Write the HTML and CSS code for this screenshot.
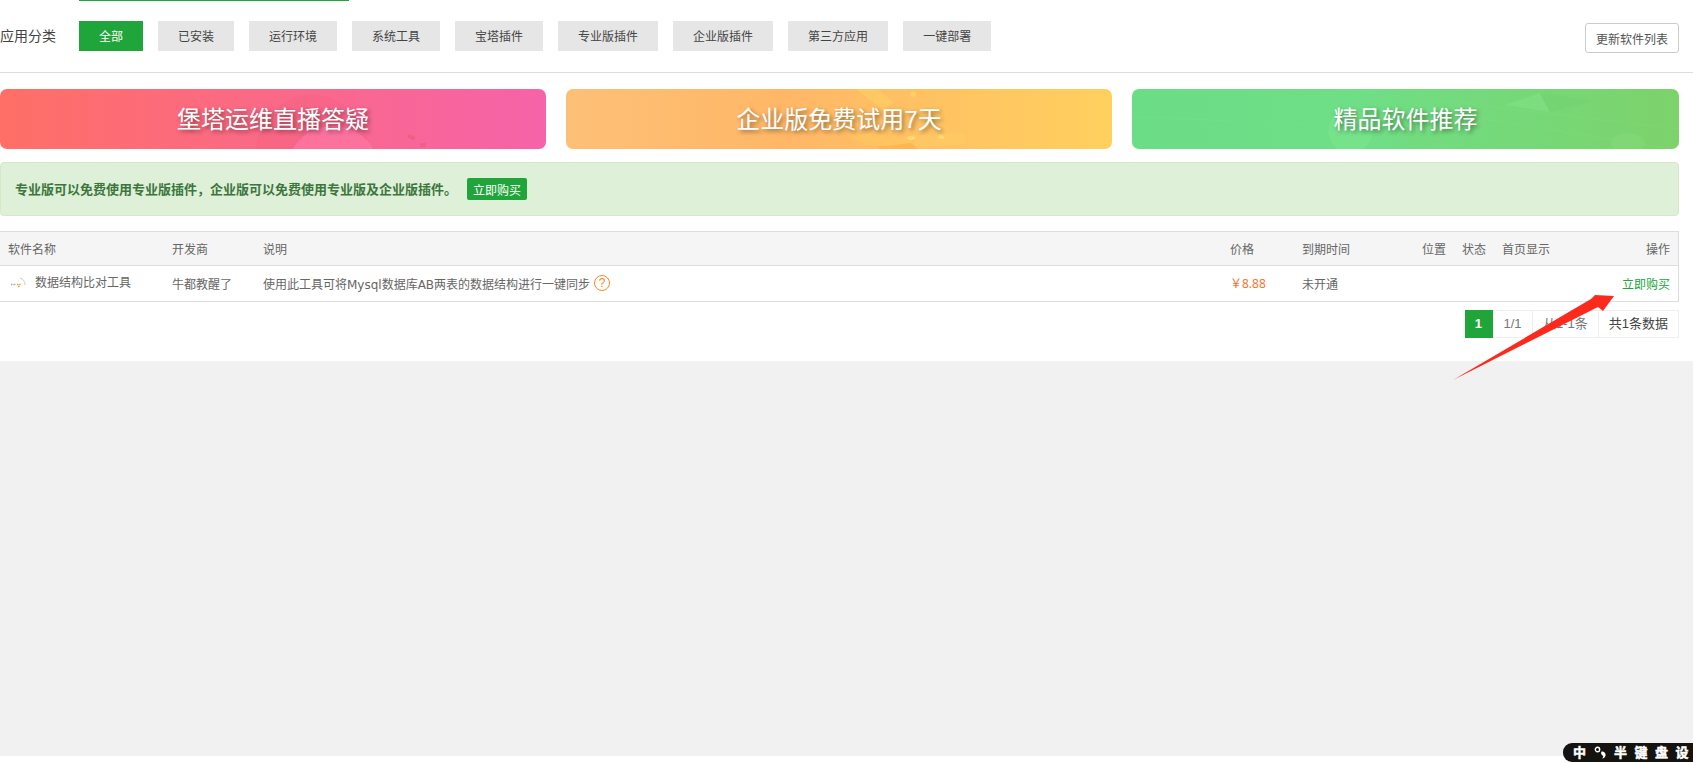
FILE: index.html
```html
<!DOCTYPE html>
<html lang="zh-CN">
<head>
<meta charset="utf-8">
<title>软件商店</title>
<link rel="stylesheet" href="styles.css">
</head>
<body>
<main class="panel">
  <div class="top-tab-line"></div>
  <div class="filter-row">
    <span class="filter-label">应用分类</span>
    <nav class="tabs">
      <a class="tab active">全部</a>
      <a class="tab">已安装</a>
      <a class="tab">运行环境</a>
      <a class="tab">系统工具</a>
      <a class="tab">宝塔插件</a>
      <a class="tab">专业版插件</a>
      <a class="tab">企业版插件</a>
      <a class="tab">第三方应用</a>
      <a class="tab">一键部署</a>
    </nav>
    <button class="refresh">更新软件列表</button>
  </div>

  <section class="banners">
    <div class="banner banner-pink">
      <svg class="banner-art" viewBox="0 0 546 60" preserveAspectRatio="none">
        <circle cx="312" cy="62" r="56" fill="#ee5a6e" opacity=".16"/>
        <circle cx="333" cy="84" r="47" fill="#ff7cab" opacity=".6"/>
        <rect x="408" y="46" width="7" height="4" fill="#e8505f" opacity=".4" transform="rotate(25 411 48)"/>
        <rect x="420" y="54" width="6" height="4" fill="#e8505f" opacity=".3"/>
      </svg>
      <span class="banner-text">堡塔运维直播答疑</span>
    </div>
    <div class="banner banner-orange">
      <svg class="banner-art" viewBox="0 0 546 60" preserveAspectRatio="none">
        <polygon points="290,0 312,0 328,14 316,20" fill="#ffd564" opacity=".45"/>
        <circle cx="347" cy="5" r="3" fill="#ffd564" opacity=".7"/>
        <polygon points="280,46 310,44 345,48 345,58 300,56" fill="#ffc95c" opacity=".45"/>
        <polygon points="345,46 398,44 399,55 350,58" fill="#ffd066" opacity=".35"/>
        <ellipse cx="345" cy="49" rx="4" ry="2" fill="#ffe27a" opacity=".7"/>
        <ellipse cx="375" cy="48" rx="3" ry="2" fill="#ffe27a" opacity=".7"/>
        <polygon points="310,58 345,54 352,60 315,60" fill="#fda93f" opacity=".45"/>
      </svg>
      <span class="banner-text">企业版免费试用7天</span>
    </div>
    <div class="banner banner-green">
      <svg class="banner-art" viewBox="0 0 546 60" preserveAspectRatio="none">
        <path d="M0 28 L200 36 M210 0 L546 40 M350 30 L540 60" stroke="#8ee28f" stroke-width="1" opacity=".2" fill="none"/>
        <polygon points="372,16 407,4 417,23" fill="#86e68e" opacity=".4"/>
        <polygon points="407,4 460,12 417,23" fill="#6cc96a" opacity=".18"/>
        <circle cx="218" cy="42" r="22" fill="#86ea96" opacity=".35"/>
        <ellipse cx="495" cy="54" rx="17" ry="10" fill="#8ade82" opacity=".3"/>
        <circle cx="290" cy="42" r="18" fill="#79d777" opacity=".25"/>
      </svg>
      <span class="banner-text">精品软件推荐</span>
    </div>
  </section>

  <div class="notice">
    <span class="notice-text">专业版可以免费使用专业版插件，企业版可以免费使用专业版及企业版插件。</span>
    <button class="buy-btn">立即购买</button>
  </div>

  <table class="soft-table">
    <colgroup>
      <col class="c-name"><col class="c-dev"><col class="c-desc"><col class="c-price"><col class="c-exp"><col class="c-pos"><col class="c-state"><col class="c-home"><col>
    </colgroup>
    <thead>
      <tr>
        <th>软件名称</th><th>开发商</th><th>说明</th><th>价格</th><th>到期时间</th><th>位置</th><th>状态</th><th>首页显示</th><th class="right">操作</th>
      </tr>
    </thead>
    <tbody>
      <tr>
        <td>
          <span class="soft-name">
            <svg class="soft-icon" viewBox="0 0 16 16" width="16" height="16">
              <path d="M1 10.5h5" stroke="#9aa4ad" stroke-width="1.4" stroke-dasharray="1 .6" fill="none"/>
              <path d="M7 10.5h4M8 12.5h2" stroke="#f0a33c" stroke-width="1.4" stroke-dasharray="1.2 .5" fill="none"/>
              <path d="M10 4c3 1 5 3 5 7" stroke="#c5ccd2" stroke-width="1" fill="none"/>
            </svg>
            数据结构比对工具
          </span>
        </td>
        <td>牛都教醒了</td>
        <td><span class="desc">使用此工具可将Mysql数据库AB两表的数据结构进行一键同步<span class="help">?</span></span></td>
        <td class="price">￥8.88</td>
        <td>未开通</td>
        <td></td>
        <td></td>
        <td></td>
        <td class="right"><a class="buy-link">立即购买</a></td>
      </tr>
    </tbody>
  </table>

  <div class="pager">
    <span class="page current">1</span>
    <span class="page ratio">1/1</span>
    <span class="page">从1-1条</span>
    <span class="page dark">共1条数据</span>
  </div>
</main>
<div class="page-foot"></div>

<svg class="arrow" width="1693" height="763" viewBox="0 0 1693 763">
  <polygon points="1453,380 1591,299 1595,295 1614,296 1603,311 1598,307" fill="#fb2a1c"/>
</svg>

<div class="ime">
  <span>中</span>
  <svg class="ime-icon" viewBox="0 0 13 13" width="13" height="13">
    <circle cx="3.5" cy="3.5" r="2.2" fill="none" stroke="#fff" stroke-width="1.4"/>
    <path d="M7.5 5.5c3 0 4.5 2 4 4.2-.4 1.6-1.8 2.6-3.4 2.8 1-1 1.4-2 .8-2.8-1.4-.4-2.4-3-1.4-4.2z" fill="#fff"/>
  </svg>
  <span>半</span><span>键</span><span>盘</span><span>设</span>
</div>
</body>
</html>
```
FILE: styles.css
```css
* { box-sizing: border-box; }
html, body { margin: 0; padding: 0; }
body {
  width: 1693px;
  height: 763px;
  overflow: hidden;
  position: relative;
  background: #f1f1f1;
  font-family: "Liberation Sans", "Noto Sans CJK SC", sans-serif;
  font-size: 12px;
  color: #666;
  display: flex;
  flex-direction: column;
}
.panel {
  height: 361px;
  background: #fff;
  padding-right: 14px;
  flex: none;
}
.page-foot {
  margin-top: auto;
  height: 7px;
  background: #fff;
}
.top-tab-line {
  width: 270px;
  height: 1px;
  margin-left: 79px;
  background: #20a53a;
}
.filter-row {
  display: flex;
  align-items: flex-start;
  height: 71px;
  margin-right: -14px;
  padding: 20px 14px 0 0;
  box-shadow: 0 1px 0 #ddd;
}
.filter-label {
  width: 79px;
  flex: none;
  font-size: 14px;
  line-height: 30px;
  color: #444;
}
.tabs { display: flex; gap: 15px; flex: 1; }
.tab {
  height: 30px;
  line-height: 32px;
  padding: 0 20px;
  background: #e6e6e6;
  color: #444;
  font-size: 12px;
}
.tab.active { background: #20a53a; color: #fff; }
.refresh {
  width: 94px;
  height: 30px;
  margin-top: 2px;
  padding: 0;
  background: #fff;
  border: 1px solid #ccc;
  border-radius: 3px;
  color: #555;
  font: inherit;
  font-size: 12px;
}
.banners {
  display: grid;
  grid-template-columns: 546px 546px 1fr;
  gap: 20px;
  margin-top: 17px;
}
.banner {
  position: relative;
  overflow: hidden;
  height: 60px;
  border-radius: 7px;
  display: flex;
  align-items: center;
  justify-content: center;
}
.banner-pink { background: linear-gradient(90deg, #ff6f66, #f663a9); }
.banner-orange { background: linear-gradient(90deg, #fdc077, #ffb766 40%, #ffd05e); }
.banner-green { background: linear-gradient(90deg, #6cdd87, #6edf86 40%, #7dd26b); }
.banner-art {
  position: absolute;
  inset: 0;
  width: 100%;
  height: 100%;
}
.banner-text {
  position: relative;
  margin-top: 1px;
  font-size: 24px;
  line-height: 32px;
  color: #fff;
  text-shadow: 2px 2px 4px rgba(0, 0, 0, .45);
}
.notice {
  display: flex;
  align-items: center;
  height: 54px;
  margin-top: 13px;
  padding: 0 14px;
  background: #dff0d8;
  border: 1px solid #d6e9c6;
  border-radius: 4px;
  gap: 10px;
}
.notice-text {
  padding-bottom: 2px;
  font-size: 13px;
  font-weight: bold;
  color: #3c763d;
}
.buy-btn {
  width: 60px;
  height: 22px;
  padding: 0;
  background: #20a53a;
  border: 0;
  border-radius: 2px;
  color: #fff;
  font: inherit;
  font-size: 12px;
}
.soft-table {
  width: 100%;
  margin-top: 15px;
  table-layout: fixed;
  border-collapse: separate;
  border-spacing: 0;
  border: 1px solid #ddd;
  border-left: 0;
  color: #666;
}
.c-name { width: 164px; }
.c-dev { width: 91px; }
.c-desc { width: 967px; }
.c-price { width: 72px; }
.c-exp { width: 120px; }
.c-pos { width: 40px; }
.c-state { width: 40px; }
.c-home { width: 80px; }
.soft-table th {
  height: 34px;
  padding: 0 8px;
  background: #f5f5f5;
  border-bottom: 1px solid #ddd;
  font-weight: normal;
  text-align: left;
  white-space: nowrap;
}
.soft-table td {
  height: 35px;
  padding: 0 8px 1px;
  white-space: nowrap;
}
.soft-table .right { text-align: right; }
.soft-name { display: inline-flex; align-items: center; gap: 9px; margin-left: 2px; }
.soft-icon { flex: none; }
.desc { display: inline-flex; align-items: center; gap: 4px; font-family: "DejaVu Sans", "Noto Sans CJK SC", sans-serif; }
.help {
  width: 16px;
  height: 16px;
  border: 1px solid #f58a27;
  border-radius: 50%;
  color: #f58a27;
  font-family: "Liberation Sans", sans-serif;
  font-size: 12px;
  line-height: 14px;
  text-align: center;
}
.soft-table .price {
  padding-left: 8px;
  color: #fc6d26;
  font-family: "Open Sans", "Noto Sans CJK SC", sans-serif;
}
.buy-link { color: #20a53a; }
.pager {
  display: flex;
  justify-content: flex-end;
  margin-top: 8px;
}
.page {
  height: 28px;
  line-height: 26px;
  padding: 0 10px;
  border: 1px solid #eee;
  border-left: 0;
  font-size: 13px;
  color: #777;
}
.page.ratio { width: 40px; padding: 0; text-align: center; }
.page.current {
  width: 28px;
  padding: 0;
  text-align: center;
  background: #20a53a;
  border-color: #20a53a;
  color: #fff;
  font-weight: bold;
}
.page.dark { color: #444; }
.arrow {
  position: absolute;
  left: 0;
  top: 0;
  pointer-events: none;
}
.ime {
  position: absolute;
  right: 0;
  top: 743px;
  width: 130px;
  height: 19px;
  padding-left: 10px;
  display: flex;
  gap: 7.5px;
  align-items: center;
  background: #14130f;
  border-radius: 9px 0 0 9px;
  color: #fff;
  font-size: 13px;
  font-weight: bold;
  line-height: 19px;
  -webkit-text-stroke: .5px #fff;
}
.ime-icon { flex: none; }
```
